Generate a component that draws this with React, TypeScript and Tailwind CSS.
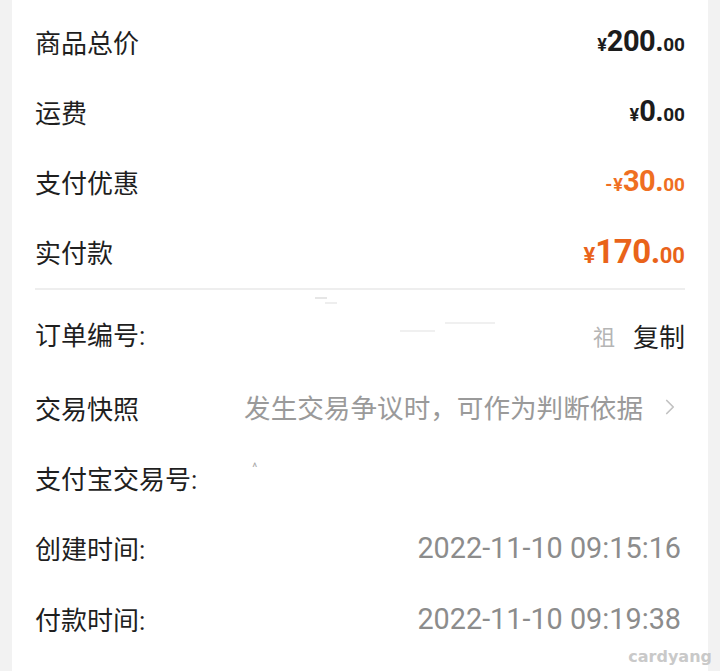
import { ChevronRight } from 'lucide-react'

const cjk = { fontFamily: '"Noto Sans CJK SC", "Noto Sans", sans-serif' }
const num = { fontFamily: 'Roboto, "Noto Sans CJK SC", sans-serif' }

type Amount = { label: string; sign?: string; int: string; dec: string; tone: 'dark' | 'light' | 'strong' }

const amounts: Amount[] = [
  { label: '商品总价', int: '200', dec: '00', tone: 'dark' },
  { label: '运费', int: '0', dec: '00', tone: 'dark' },
  { label: '支付优惠', sign: '-', int: '30', dec: '00', tone: 'light' },
  { label: '实付款', int: '170', dec: '00', tone: 'strong' },
]

const Price = ({ a }: { a: Amount }) => {
  const color = a.tone === 'dark' ? 'text-[#1c1c1c]' : a.tone === 'light' ? 'text-[#ef6f22]' : 'text-[#e9631a]'
  const big = a.tone === 'strong' ? 'text-[33px]' : 'text-[29px]'
  const small = a.tone === 'strong' ? 'text-[22px]' : 'text-[19px]'
  return (
    <div className={`flex items-baseline font-bold leading-none ${color}`} style={num}>
      {a.sign && <span className="text-[18px] mr-[1px]">{a.sign}</span>}
      <span className={a.tone === 'strong' ? 'text-[22px]' : 'text-[18px]'}>¥</span>
      <span className={`${big} tracking-[-0.5px]`}>{a.int}.</span>
      <span className={small}>{a.dec}</span>
    </div>
  )
}

export default function App() {
  return (
    <div className="relative w-[720px] h-[671px] overflow-hidden bg-[#f2f2f2]">
      <div className="ml-[12px] w-[696px] h-full bg-white px-[23px] pt-[6px]" style={cjk}>
        {/* 金额 */}
        {amounts.map((a) => (
          <div key={a.label} className="flex h-[70px] items-center justify-between">
            <span className="text-[26px] text-[#1f1f1f]">{a.label}</span>
            <Price a={a} />
          </div>
        ))}

        <div className="mt-[2px] h-[2px] bg-[#eeeeee]" />

        {/* 订单信息 */}
        <div className="pt-[10px]">
          <div className="relative flex h-[70px] items-center justify-between">
            <span className="text-[26px] text-[#1f1f1f]">订单编号<span style={num}>:</span></span>
            <div className="flex items-center">
              <span className="mr-[18px] text-[22px] text-[#b5b5b5]">祖</span>
              <span className="text-[26px] text-[#1f1f1f]">复制</span>
            </div>
            <div className="absolute left-[280px] top-[-3px] h-[2px] w-[12px] bg-[#e6e6e6]" />
            <div className="absolute left-[290px] top-[2px] h-[2px] w-[12px] bg-[#eeeeee]" />
            <div className="absolute left-[365px] top-[30px] h-[2px] w-[35px] bg-[#f0f0f0]" />
            <div className="absolute left-[410px] top-[22px] h-[2px] w-[50px] bg-[#f0f0f0]" />
          </div>

          <div className="flex h-[74px] items-center justify-between">
            <span className="text-[26px] text-[#1f1f1f]">交易快照</span>
            <div className="flex items-center">
              <span className="text-[26.6px] text-[#9a9a9a]">发生交易争议时，可作为判断依据</span>
              <ChevronRight className="ml-[14px] mr-[2px] h-[26px] w-[26px] text-[#c2c2c2]" strokeWidth={1.6} />
            </div>
          </div>

          <div className="flex h-[70px] items-center">
            <span className="text-[26px] text-[#1f1f1f]">支付宝交易号<span style={num}>:</span></span>
            <span className="ml-[55px] mb-[22px] text-[12px] text-[#aaaaaa]" style={num}>^</span>
          </div>

          <div className="flex h-[70px] items-center justify-between">
            <span className="text-[26px] text-[#1f1f1f]">创建时间<span style={num}>:</span></span>
            <span className="mr-[4px] text-[28.8px] text-[#8c8c8c]" style={num}>2022-11-10 09:15:16</span>
          </div>

          <div className="flex h-[72px] items-center justify-between">
            <span className="text-[26px] text-[#1f1f1f]">付款时间<span style={num}>:</span></span>
            <span className="mr-[4px] text-[28.8px] text-[#8c8c8c]" style={num}>2022-11-10 09:19:38</span>
          </div>
        </div>
      </div>

      {/* 水印 */}
      <span
        className="absolute right-[8px] bottom-[6px] text-[16px] font-black leading-none text-[#c9c9c9] [text-shadow:0_0_1px_#ffffff]"
        style={{ fontFamily: '"DejaVu Sans", sans-serif' }}
      >
        cardyang
      </span>
    </div>
  )
}
